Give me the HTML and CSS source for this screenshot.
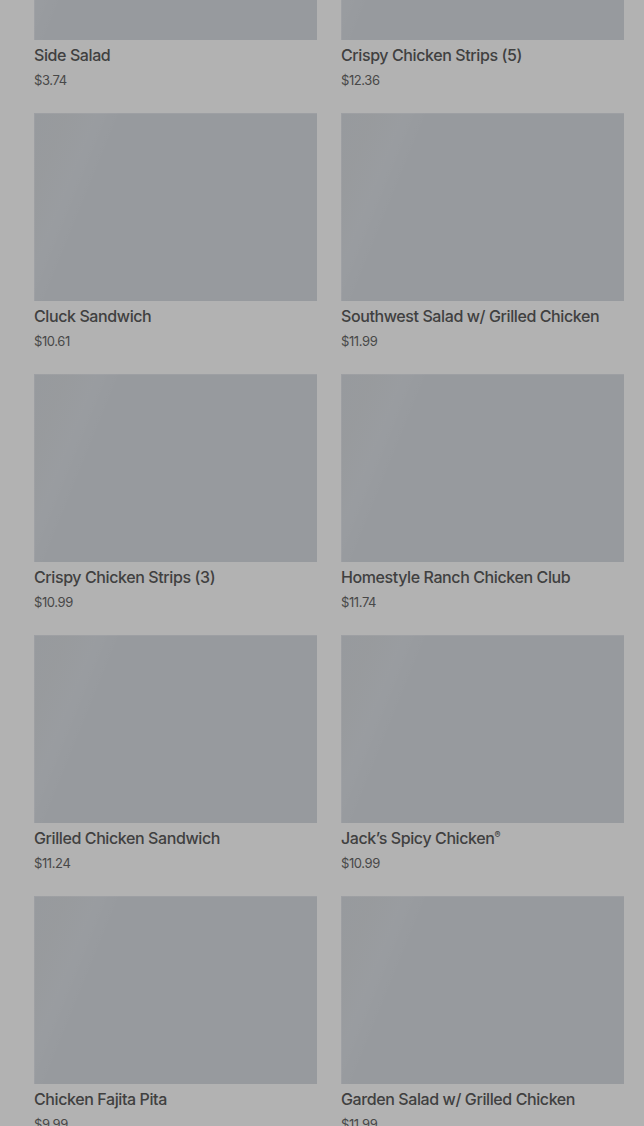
FILE: index.html
```html
<!DOCTYPE html>
<html lang="en">
<head>
<meta charset="utf-8">
<title>Menu</title>
<link rel="stylesheet" href="styles.css">
</head>
<body>
<div class="grid">
  <div class="item"><div class="thumb"></div><div class="name">Side Salad</div><div class="price">$3.74</div></div>
  <div class="item"><div class="thumb"></div><div class="name">Crispy Chicken Strips (5)</div><div class="price">$12.36</div></div>
  <div class="item"><div class="thumb"></div><div class="name">Cluck Sandwich</div><div class="price">$10.61</div></div>
  <div class="item"><div class="thumb"></div><div class="name">Southwest Salad w/ Grilled Chicken</div><div class="price">$11.99</div></div>
  <div class="item"><div class="thumb"></div><div class="name">Crispy Chicken Strips (3)</div><div class="price">$10.99</div></div>
  <div class="item"><div class="thumb"></div><div class="name">Homestyle Ranch Chicken Club</div><div class="price">$11.74</div></div>
  <div class="item"><div class="thumb"></div><div class="name">Grilled Chicken Sandwich</div><div class="price">$11.24</div></div>
  <div class="item"><div class="thumb"></div><div class="name">Jack’s Spicy Chicken<sup class="reg">®</sup></div><div class="price">$10.99</div></div>
  <div class="item"><div class="thumb"></div><div class="name">Chicken Fajita Pita</div><div class="price">$9.99</div></div>
  <div class="item"><div class="thumb"></div><div class="name">Garden Salad w/ Grilled Chicken</div><div class="price">$11.99</div></div>
</div>
</body>
</html>
```
FILE: styles.css
```css
html, body {
  margin: 0;
  padding: 0;
  background: #b2b2b2;
  overflow: hidden;
}
body {
  font-family: Inter, "Noto Sans", "Liberation Sans", sans-serif;
  color: #3c3c3c;
}
.grid {
  display: grid;
  grid-template-columns: 283px 283px;
  column-gap: 24px;
  row-gap: 23px;
  padding: 0 20px 0 34px;
  margin-top: -148px;
}
.item {
  display: flex;
  flex-direction: column;
}
.thumb {
  height: 188px;
  background-color: #979a9e;
  background-image: linear-gradient(112deg, rgba(255,255,255,0) 0%, rgba(170,165,150,0.06) 9%, rgba(255,255,255,0.025) 18%, rgba(255,255,255,0) 25%);
  box-shadow: inset 1px 1px 0 rgba(255,255,255,0.06);
}
.name {
  margin-top: 3px;
  font-size: 16px;
  line-height: 24px;
  font-weight: 500;
  letter-spacing: -0.4px;
  color: #404040;
  white-space: nowrap;
}
.reg {
  font-size: 9px;
  line-height: 0;
  vertical-align: 6px;
}
.price {
  margin-top: 3px;
  font-size: 13px;
  line-height: 20px;
  font-weight: 400;
  color: #484848;
  letter-spacing: -0.4px;
}
```
